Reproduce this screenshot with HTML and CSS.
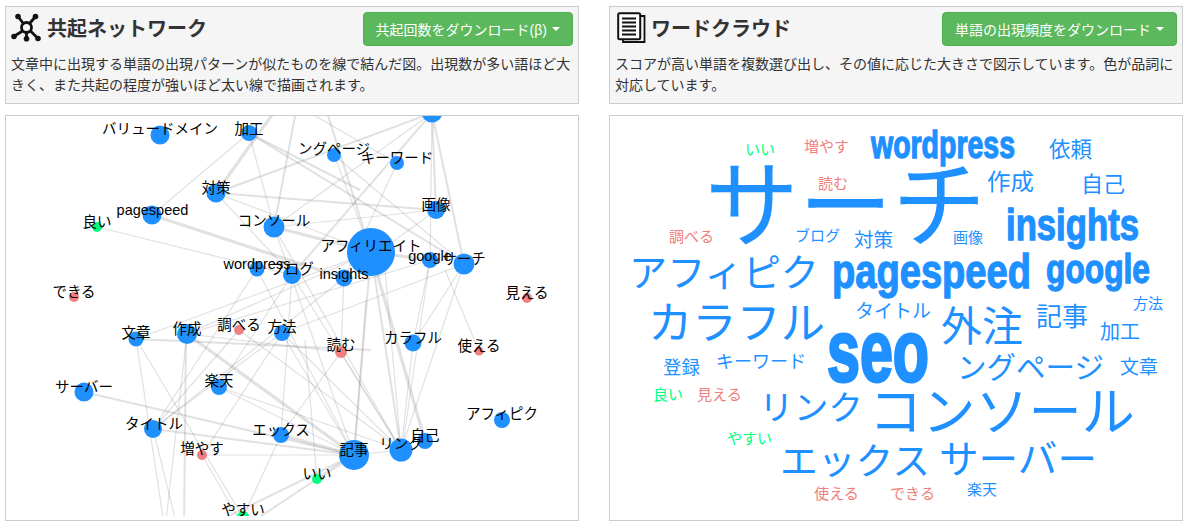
FILE: index.html
```html
<!DOCTYPE html>
<html lang="ja">
<head>
<meta charset="utf-8">
<title>共起ネットワーク</title>
<link rel="stylesheet" href="styles.css">
</head>
<body>
<main class="page">
<section class="col">
  <div class="info">
    <div class="info-head">
      <h2 class="title">
        <svg class="icon" viewBox="0 0 31 29"><g class="ic-net"><circle cx="15.5" cy="14.5" r="5"/><path d="M12 10 7 3.5M19 10 24.5 3.5M11.5 18 3.5 23M15.5 19.5v6M19.5 18l7 7"/></g><g class="ic-dot"><circle cx="7" cy="3.5" r="2.8"/><circle cx="24.5" cy="3.5" r="2.8"/><circle cx="3" cy="23.5" r="2.8"/><circle cx="15.5" cy="25.8" r="2.8"/><circle cx="27" cy="25.5" r="2.8"/></g></svg>
        <span>共起ネットワーク</span>
      </h2>
      <button class="btn">共起回数をダウンロード(β)<i class="caret"></i></button>
    </div>
    <p class="desc">文章中に出現する単語の出現パターンが似たものを線で結んだ図。出現数が多い語ほど大きく、また共起の程度が強いほど太い線で描画されます。</p>
  </div>
  <div class="canvas">
    <svg class="net" viewBox="6 116 572 400">
      <g class="edges">
        <line class="w3" x1="216" y1="193" x2="290" y2="90"/>
        <line class="w3" x1="152" y1="215" x2="344" y2="278"/>
        <line class="w3" x1="274" y1="227" x2="371" y2="252"/>
        <line class="w3" x1="371" y1="252" x2="430" y2="260"/>
        <line class="w3" x1="371" y1="252" x2="425" y2="441"/>
        <line class="w3" x1="281" y1="435" x2="354" y2="455"/>
        <line class="w3" x1="317" y1="479" x2="354" y2="455"/>
        <line class="w3" x1="187" y1="334" x2="354" y2="455"/>
        <line class="w2" x1="432" y1="113" x2="436" y2="210"/>
        <line class="w2" x1="432" y1="113" x2="464" y2="264"/>
        <line class="w2" x1="432" y1="113" x2="216" y2="193"/>
        <line class="w2" x1="432" y1="113" x2="292" y2="275"/>
        <line class="w2" x1="249" y1="133" x2="464" y2="264"/>
        <line class="w2" x1="216" y1="193" x2="436" y2="210"/>
        <line class="w2" x1="274" y1="227" x2="300" y2="90"/>
        <line class="w2" x1="371" y1="252" x2="320" y2="90"/>
        <line class="w2" x1="371" y1="252" x2="354" y2="455"/>
        <line class="w2" x1="371" y1="252" x2="401" y2="450"/>
        <line class="w2" x1="84" y1="392" x2="354" y2="455"/>
        <line class="w2" x1="153" y1="429" x2="354" y2="455"/>
        <line class="w2" x1="136" y1="339" x2="371" y2="350"/>
        <line class="w2" x1="186" y1="334" x2="184" y2="530"/>
        <line class="w2" x1="354" y1="455" x2="200" y2="530"/>
        <line class="w2" x1="317" y1="479" x2="240" y2="530"/>
        <line class="w2" x1="249" y1="133" x2="360" y2="190"/>
        <line class="w1" x1="97" y1="227" x2="292" y2="275"/>
        <line class="w1" x1="152" y1="215" x2="249" y2="133"/>
        <line class="w1" x1="249" y1="133" x2="274" y2="227"/>
        <line class="w1" x1="216" y1="193" x2="292" y2="275"/>
        <line class="w1" x1="216" y1="193" x2="371" y2="252"/>
        <line class="w1" x1="274" y1="227" x2="436" y2="210"/>
        <line class="w1" x1="274" y1="227" x2="432" y2="113"/>
        <line class="w1" x1="334" y1="155" x2="371" y2="252"/>
        <line class="w1" x1="334" y1="155" x2="464" y2="264"/>
        <line class="w1" x1="397" y1="163" x2="344" y2="278"/>
        <line class="w1" x1="397" y1="163" x2="270" y2="90"/>
        <line class="w1" x1="436" y1="210" x2="344" y2="278"/>
        <line class="w1" x1="432" y1="113" x2="430" y2="260"/>
        <line class="w1" x1="464" y1="264" x2="413" y2="343"/>
        <line class="w1" x1="464" y1="264" x2="401" y2="450"/>
        <line class="w1" x1="430" y1="260" x2="413" y2="343"/>
        <line class="w1" x1="371" y1="252" x2="136" y2="339"/>
        <line class="w1" x1="371" y1="252" x2="187" y2="334"/>
        <line class="w1" x1="430" y1="260" x2="187" y2="334"/>
        <line class="w1" x1="464" y1="264" x2="282" y2="333"/>
        <line class="w1" x1="479" y1="351" x2="445" y2="270"/>
        <line class="w1" x1="257" y1="269" x2="153" y2="429"/>
        <line class="w1" x1="257" y1="269" x2="354" y2="455"/>
        <line class="w1" x1="292" y1="275" x2="219" y2="387"/>
        <line class="w1" x1="292" y1="275" x2="401" y2="450"/>
        <line class="w1" x1="292" y1="275" x2="281" y2="435"/>
        <line class="w1" x1="344" y1="278" x2="153" y2="429"/>
        <line class="w1" x1="344" y1="278" x2="341" y2="352"/>
        <line class="w1" x1="274" y1="227" x2="354" y2="455"/>
        <line class="w1" x1="274" y1="227" x2="401" y2="450"/>
        <line class="w1" x1="239" y1="330" x2="153" y2="429"/>
        <line class="w1" x1="239" y1="330" x2="401" y2="450"/>
        <line class="w1" x1="282" y1="333" x2="202" y2="455"/>
        <line class="w1" x1="282" y1="333" x2="354" y2="455"/>
        <line class="w1" x1="282" y1="333" x2="401" y2="450"/>
        <line class="w1" x1="136" y1="339" x2="165" y2="530"/>
        <line class="w1" x1="136" y1="339" x2="243" y2="517"/>
        <line class="w1" x1="187" y1="334" x2="165" y2="530"/>
        <line class="w1" x1="187" y1="334" x2="341" y2="352"/>
        <line class="w1" x1="153" y1="429" x2="178" y2="530"/>
        <line class="w1" x1="153" y1="429" x2="282" y2="333"/>
        <line class="w1" x1="219" y1="387" x2="401" y2="450"/>
        <line class="w1" x1="219" y1="387" x2="354" y2="455"/>
        <line class="w1" x1="202" y1="455" x2="354" y2="455"/>
        <line class="w1" x1="202" y1="455" x2="245" y2="530"/>
        <line class="w1" x1="281" y1="435" x2="243" y2="517"/>
        <line class="w1" x1="341" y1="352" x2="281" y2="435"/>
        <line class="w1" x1="341" y1="352" x2="401" y2="450"/>
        <line class="w1" x1="413" y1="343" x2="401" y2="450"/>
        <line class="w1" x1="354" y1="455" x2="401" y2="450"/>
        <line class="w1" x1="317" y1="479" x2="305" y2="340"/>
        <line class="w1" x1="354" y1="455" x2="366" y2="300"/>
        <line class="w1" x1="401" y1="450" x2="385" y2="270"/>
        <line class="w1" x1="430" y1="260" x2="402" y2="450"/>
      </g>
      <g class="blue">
        <circle cx="432" cy="112" r="10.5"/>
        <circle cx="160" cy="135" r="9.5"/><circle cx="249" cy="133" r="8"/>
        <circle cx="216" cy="193" r="9.5"/><circle cx="152" cy="215" r="9.5"/>
        <circle cx="274" cy="227" r="10.5"/><circle cx="257" cy="269" r="7.5"/>
        <circle cx="292" cy="275" r="9"/><circle cx="334" cy="155" r="7"/>
        <circle cx="397" cy="163" r="7"/><circle cx="436" cy="210" r="9"/>
        <circle cx="371" cy="252" r="24"/><circle cx="430" cy="260" r="8"/>
        <circle cx="464" cy="264" r="10.5"/><circle cx="344" cy="278" r="8.5"/>
        <circle cx="136" cy="339" r="7.5"/><circle cx="187" cy="334" r="10"/>
        <circle cx="282" cy="333" r="8"/><circle cx="84" cy="392" r="9.5"/>
        <circle cx="219" cy="387" r="8"/><circle cx="153" cy="429" r="9"/>
        <circle cx="281" cy="435" r="8"/><circle cx="413" cy="343" r="8.5"/>
        <circle cx="502" cy="420" r="8"/><circle cx="354" cy="455" r="15"/>
        <circle cx="401" cy="450" r="11.5"/><circle cx="425" cy="441" r="8"/>
      </g>
      <g class="red">
        <circle cx="74" cy="297" r="5"/><circle cx="527" cy="298" r="5"/>
        <circle cx="239" cy="330" r="5"/><circle cx="202" cy="455" r="5"/>
        <circle cx="341" cy="352" r="6"/><circle cx="479" cy="351" r="4.5"/>
      </g>
      <g class="green">
        <circle cx="97" cy="227" r="5"/><circle cx="243" cy="517" r="6"/><circle cx="317" cy="479" r="5"/>
      </g>
      <g class="labels">
        <text x="160" y="134">バリュードメイン</text><text x="249" y="134">加工</text>
        <text x="216" y="193">対策</text><text x="152.5" y="215">pagespeed</text>
        <text x="97" y="227">良い</text><text x="274" y="226">コンソール</text>
        <text x="257" y="269">wordpress</text><text x="292" y="274">ブログ</text>
        <text x="74" y="297">できる</text><text x="334" y="154">ングページ</text>
        <text x="397" y="163">キーワード</text><text x="436" y="210">画像</text>
        <text x="371" y="251">アフィリエイト</text><text x="430" y="261">google</text>
        <text x="464" y="264">サーチ</text><text x="344" y="279">insights</text>
        <text x="527" y="298">見える</text><text x="136" y="338">文章</text>
        <text x="187" y="334">作成</text><text x="239" y="330">調べる</text>
        <text x="282" y="332">方法</text><text x="84" y="392">サーバー</text>
        <text x="219" y="386">楽天</text><text x="154" y="429">タイトル</text>
        <text x="281" y="435">エックス</text><text x="202" y="454">増やす</text>
        <text x="243" y="515">やすい</text><text x="341" y="350">読む</text>
        <text x="413" y="343">カラフル</text><text x="479" y="351">使える</text>
        <text x="502" y="419">アフィピク</text><text x="354" y="455">記事</text>
        <text x="401" y="449">リンク</text><text x="425" y="441">自己</text>
        <text x="317" y="479">いい</text>
      </g>
    </svg>
  </div>
</section>
<section class="col">
  <div class="info">
    <div class="info-head">
      <h2 class="title">
        <svg class="icon icon-doc" viewBox="0 0 29 31"><path class="ic-back" d="M24 4h3.5v26H6v-2.5"/><rect class="ic-page" x="1.2" y="1.2" width="22" height="26" rx="1.5"/><path class="ic-rows" d="M5 6.5h14M5 10.5h14M5 14.5h14M5 18.5h14M5 22.5h14"/></svg>
        <span>ワードクラウド</span>
      </h2>
      <button class="btn">単語の出現頻度をダウンロード<i class="caret"></i></button>
    </div>
    <p class="desc">スコアが高い単語を複数選び出し、その値に応じた大きさで図示しています。色が品詞に対応しています。</p>
  </div>
  <div class="canvas">
    <svg class="cloud" viewBox="610 116 572 404">
      <g class="cb">
        <text x="705" y="240" font-size="95" textLength="281" lengthAdjust="spacingAndGlyphs">サーチ</text>
        <text x="629" y="286" font-size="38" textLength="190" lengthAdjust="spacingAndGlyphs">アフィピク</text>
        <text x="648" y="339" font-size="44" textLength="177" lengthAdjust="spacingAndGlyphs">カラフル</text>
        <text x="941" y="341" font-size="41" textLength="82" lengthAdjust="spacingAndGlyphs">外注</text>
        <text x="1036" y="326" font-size="26" textLength="52" lengthAdjust="spacingAndGlyphs">記事</text>
        <text x="1100" y="339" font-size="20" textLength="40" lengthAdjust="spacingAndGlyphs">加工</text>
        <text x="1133" y="309" font-size="15" textLength="30" lengthAdjust="spacingAndGlyphs">方法</text>
        <text x="855" y="318" font-size="19" textLength="76" lengthAdjust="spacingAndGlyphs">タイトル</text>
        <text x="957" y="378" font-size="29.5" textLength="147" lengthAdjust="spacingAndGlyphs">ングページ</text>
        <text x="1120" y="374" font-size="19" textLength="38" lengthAdjust="spacingAndGlyphs">文章</text>
        <text x="869" y="431" font-size="53" textLength="266" lengthAdjust="spacingAndGlyphs">コンソール</text>
        <text x="759" y="420" font-size="34" textLength="104" lengthAdjust="spacingAndGlyphs">リンク</text>
        <text x="780" y="475" font-size="37" textLength="150" lengthAdjust="spacingAndGlyphs">エックス</text>
        <text x="939" y="473" font-size="39" textLength="158" lengthAdjust="spacingAndGlyphs">サーバー</text>
        <text x="663" y="374" font-size="18" textLength="37" lengthAdjust="spacingAndGlyphs">登録</text>
        <text x="716" y="368" font-size="18" textLength="90" lengthAdjust="spacingAndGlyphs">キーワード</text>
        <text x="967" y="495" font-size="15" textLength="30" lengthAdjust="spacingAndGlyphs">楽天</text>
        <text x="795" y="241" font-size="15" textLength="45" lengthAdjust="spacingAndGlyphs">ブログ</text>
        <text x="854" y="247" font-size="19" textLength="39" lengthAdjust="spacingAndGlyphs">対策</text>
        <text x="953" y="243" font-size="15" textLength="30" lengthAdjust="spacingAndGlyphs">画像</text>
        <text x="987" y="190" font-size="23" textLength="47" lengthAdjust="spacingAndGlyphs">作成</text>
        <text x="1081" y="192" font-size="22" textLength="44" lengthAdjust="spacingAndGlyphs">自己</text>
        <text x="1049" y="157" font-size="21.5" textLength="43" lengthAdjust="spacingAndGlyphs">依頼</text>
      </g>
      <g class="cr">
        <text x="697" y="400" font-size="15" textLength="45" lengthAdjust="spacingAndGlyphs">見える</text>
        <text x="814" y="499" font-size="15" textLength="45" lengthAdjust="spacingAndGlyphs">使える</text>
        <text x="890" y="499" font-size="15" textLength="45" lengthAdjust="spacingAndGlyphs">できる</text>
        <text x="804" y="152" font-size="15" textLength="45" lengthAdjust="spacingAndGlyphs">増やす</text>
        <text x="818" y="189" font-size="15" textLength="30" lengthAdjust="spacingAndGlyphs">読む</text>
        <text x="669" y="242" font-size="15" textLength="45" lengthAdjust="spacingAndGlyphs">調べる</text>
      </g>
      <g class="cg">
        <text x="653" y="400" font-size="15" textLength="30" lengthAdjust="spacingAndGlyphs">良い</text>
        <text x="727" y="444" font-size="15" textLength="45" lengthAdjust="spacingAndGlyphs">やすい</text>
        <text x="745" y="155" font-size="15" textLength="30" lengthAdjust="spacingAndGlyphs">いい</text>
      </g>
      <g class="ci">
        <text x="871" y="158" font-size="38" textLength="144" lengthAdjust="spacingAndGlyphs">wordpress</text>
        <text x="1006" y="240" font-size="44" textLength="133" lengthAdjust="spacingAndGlyphs">insights</text>
        <text x="832" y="288" font-size="48" textLength="199" lengthAdjust="spacingAndGlyphs">pagespeed</text>
        <text x="1046" y="283" font-size="40" textLength="104" lengthAdjust="spacingAndGlyphs">google</text>
        <text class="ci-big" x="827" y="381" font-size="88" textLength="102" lengthAdjust="spacingAndGlyphs">seo</text>
      </g>
    </svg>
  </div>
</section>
</main>
</body>
</html>
```
FILE: styles.css
```css
* { box-sizing: border-box; }
html, body { margin: 0; padding: 0; background: #fff; }
body {
  font-family: "Liberation Sans", "Noto Sans CJK JP", sans-serif;
  color: #333;
  font-size: 14px;
  overflow: hidden;
}
.page {
  display: flex;
  gap: 30px;
  padding: 6px 8px 0 5px;
  height: 528px;
}
.col {
  width: 574px;
  display: flex;
  flex-direction: column;
  gap: 11px;
}
.info {
  height: 98px;
  background: #f5f5f5;
  border: 1px solid #ccc;
  padding: 5px 5px 0 5px;
}
.info-head {
  display: flex;
  justify-content: space-between;
  align-items: flex-start;
  height: 35px;
}
.title {
  margin: 0;
  display: flex;
  align-items: center;
  gap: 5px;
  font-size: 20px;
  font-weight: 700;
  color: #333;
  height: 31px;
}
.icon { width: 31px; height: 29px; flex: none; }
.icon-doc { width: 29px; height: 31px; margin-left: 2px; }
.ic-net { fill: none; stroke: #111; stroke-width: 2.8; }
.ic-dot { fill: #111; }
.ic-back { fill: none; stroke: #111; stroke-width: 1.8; }
.ic-page { fill: #fff; stroke: #111; stroke-width: 2; }
.ic-rows { fill: none; stroke: #111; stroke-width: 1.8; }
.btn {
  font: inherit;
  color: #fff;
  background: #5cb85c;
  border: 1px solid #4cae4c;
  border-radius: 4px;
  height: 34px;
  padding: 0 12px;
  display: flex;
  align-items: center;
  white-space: nowrap;
}
.caret {
  display: inline-block;
  margin-left: 5px;
  border-top: 4px solid #fff;
  border-left: 4px solid transparent;
  border-right: 4px solid transparent;
}
.desc {
  margin: 7px 0 0;
  line-height: 21px;
  font-size: 14px;
}
.canvas {
  height: 406px;
  border: 1px solid #ccc;
  background: #fff;
}
.net, .cloud { display: block; width: 572px; }
.net { height: 400px; }
.cloud { height: 404px; }
.edges line { stroke: #808080; stroke-opacity: .24; }
.w1 { stroke-width: 1.2; }
.w2 { stroke-width: 2; }
.w3 { stroke-width: 3.2; }
.blue { fill: #1e90ff; }
.red { fill: #f08080; }
.green { fill: #00ff7f; }
.labels text {
  fill: #000;
  font-size: 14.5px;
  text-anchor: middle;
}
.cb text { fill: #1e90ff; }
.cr text { fill: #f08080; }
.cg text { fill: #00ff7f; }
.ci text {
  fill: #1e90ff;
  font-weight: 700;
  stroke: #1e90ff;
  stroke-width: 1.3;
}
.ci .ci-big { stroke-width: 3; }
```
